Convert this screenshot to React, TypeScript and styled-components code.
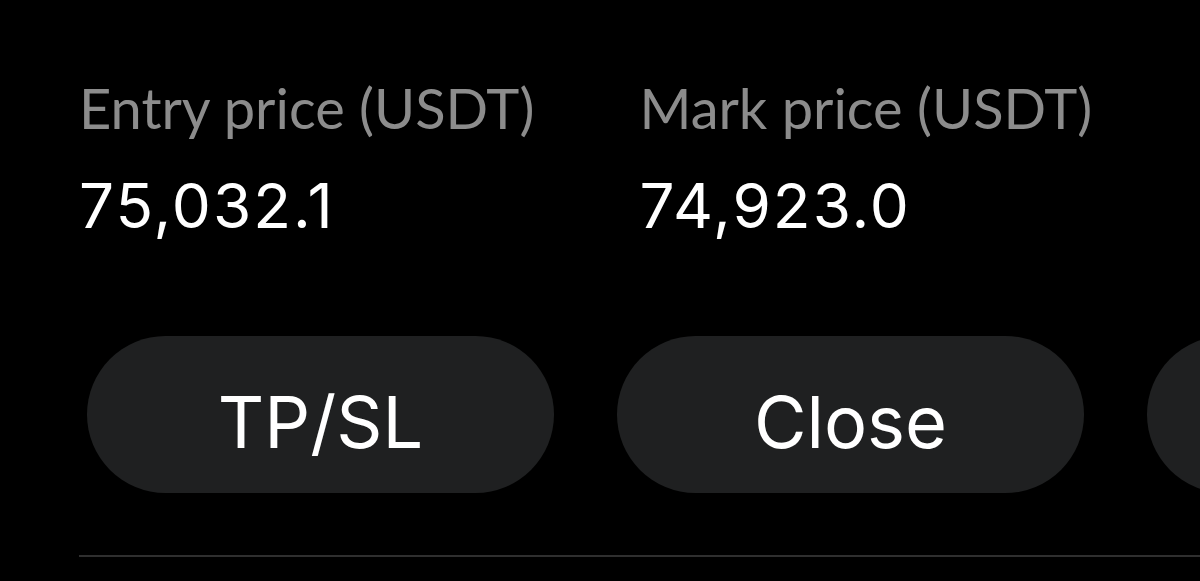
import React from 'react';
import styled, { createGlobalStyle } from 'styled-components';

const GlobalStyle = createGlobalStyle`
  html, body {
    margin: 0;
    padding: 0;
    background: #000;
    overflow: hidden;
  }
  body {
    font-family: Inter, "Noto Sans", sans-serif;
  }
`;

const stats = [
    { label: 'Entry price (USDT)', value: '75,032.1' },
    { label: 'Mark price (USDT)', value: '74,923.0' },
];

// the third action is cut by the right edge, its label lies outside the view
const actions = ['TP/SL', 'Close', ''];

const App = () => {
    return (
        <Screen>
            <GlobalStyle />
            <StatsRow>
                {stats.map((s) => (
                    <Stat key={s.label}>
                        <Label>{s.label}</Label>
                        <Value>{s.value}</Value>
                    </Stat>
                ))}
            </StatsRow>
            <ActionsRow>
                {actions.map((a, i) => (
                    <ActionButton key={i}>{a}</ActionButton>
                ))}
            </ActionsRow>
            <Divider />
        </Screen>
    );
};

const Screen = styled.div`
  width: 1200px;
  height: 581px;
  background: #000;
  padding: 76px 0 0 79px;
  box-sizing: border-box;
  overflow: hidden;
`;

const StatsRow = styled.div`
  display: flex;
`;

const Stat = styled.div`
  width: 571px;
  display: flex;
  flex-direction: column;
`;

const Label = styled.span`
  font-family: Lato, sans-serif;
  font-size: 56px;
  line-height: 64px;
  color: #8c8c8c;
  white-space: nowrap;
`;

const Value = styled.span`
  font-family: Inter, sans-serif;
  font-size: 62px;
  line-height: 80px;
  margin-top: 26px;
  color: #fff;
  letter-spacing: 2px;
  white-space: nowrap;
`;

const ActionsRow = styled.div`
  display: flex;
  gap: 63px;
  margin-top: 90px;
  margin-left: 8px;
`;

const ActionButton = styled.button`
  flex: 0 0 467px;
  height: 157px;
  border: none;
  border-radius: 80px;
  background: #1f2021;
  color: #fff;
  font-family: Inter, sans-serif;
  font-size: 72px;
  font-weight: 400;
  padding: 14px 0 0;
`;

const Divider = styled.div`
  height: 2px;
  background: #2f2f2f;
  margin-top: 62px;
`;

export default App;
